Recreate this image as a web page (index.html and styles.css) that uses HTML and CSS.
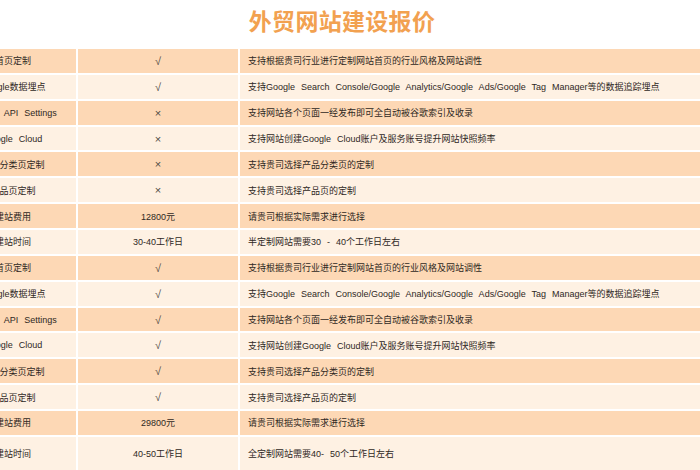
FILE: index.html
```html
<!DOCTYPE html>
<html lang="zh-CN">
<head>
<meta charset="utf-8">
<title>外贸网站建设报价</title>
<link rel="stylesheet" href="styles.css">
</head>
<body>
<div class="page">
  <h1 class="title">外贸网站建设报价</h1>
  <div class="table">
    <div class="row"><div class="c1">首页定制</div><div class="c2 mark">√</div><div class="c3">支持根据贵司行业进行定制网站首页的行业风格及网站调性</div></div>
    <div class="row"><div class="c1">Google数据埋点</div><div class="c2 mark">√</div><div class="c3">支持Google Search Console/Google Analytics/Google Ads/Google Tag Manager等的数据追踪埋点</div></div>
    <div class="row"><div class="c1">Google API Settings</div><div class="c2 mark">×</div><div class="c3">支持网站各个页面一经发布即可全自动被谷歌索引及收录</div></div>
    <div class="row"><div class="c1">Google Cloud</div><div class="c2 mark">×</div><div class="c3">支持网站创建Google Cloud账户及服务账号提升网站快照频率</div></div>
    <div class="row"><div class="c1">产品分类页定制</div><div class="c2 mark">×</div><div class="c3">支持贵司选择产品分类页的定制</div></div>
    <div class="row"><div class="c1">产品页定制</div><div class="c2 mark">×</div><div class="c3">支持贵司选择产品页的定制</div></div>
    <div class="row"><div class="c1">建站费用</div><div class="c2">12800元</div><div class="c3">请贵司根据实际需求进行选择</div></div>
    <div class="row"><div class="c1">建站时间</div><div class="c2">30-40工作日</div><div class="c3">半定制网站需要30 - 40个工作日左右</div></div>
    <div class="row"><div class="c1">首页定制</div><div class="c2 mark">√</div><div class="c3">支持根据贵司行业进行定制网站首页的行业风格及网站调性</div></div>
    <div class="row"><div class="c1">Google数据埋点</div><div class="c2 mark">√</div><div class="c3">支持Google Search Console/Google Analytics/Google Ads/Google Tag Manager等的数据追踪埋点</div></div>
    <div class="row"><div class="c1">Google API Settings</div><div class="c2 mark">√</div><div class="c3">支持网站各个页面一经发布即可全自动被谷歌索引及收录</div></div>
    <div class="row"><div class="c1">Google Cloud</div><div class="c2 mark">√</div><div class="c3">支持网站创建Google Cloud账户及服务账号提升网站快照频率</div></div>
    <div class="row"><div class="c1">产品分类页定制</div><div class="c2 mark">√</div><div class="c3">支持贵司选择产品分类页的定制</div></div>
    <div class="row"><div class="c1">产品页定制</div><div class="c2 mark">√</div><div class="c3">支持贵司选择产品页的定制</div></div>
    <div class="row"><div class="c1">建站费用</div><div class="c2">29800元</div><div class="c3">请贵司根据实际需求进行选择</div></div>
    <div class="row last"><div class="c1">建站时间</div><div class="c2">40-50工作日</div><div class="c3">全定制网站需要40- 50个工作日左右</div></div>
  </div>
</div>
</body>
</html>
```

FILE: styles.css
```css
html, body {
  margin: 0;
  padding: 0;
  background: #ffffff;
  overflow: hidden;
}
body {
  width: 700px;
  height: 470px;
  font-family: "Liberation Sans", "Noto Sans CJK SC", sans-serif;
}
.page {
  width: 700px;
  height: 470px;
  overflow: hidden;
}
.title {
  margin: 0;
  height: 49px;
  box-sizing: border-box;
  padding: 5px 16px 0 0;
  text-align: center;
  font-family: "Noto Sans CJK SC", sans-serif;
  font-size: 23px;
  line-height: 30px;
  font-weight: 700;
  color: #f2a150;
  letter-spacing: 0.3px;
}
.table {
  display: flex;
  flex-direction: column;
  gap: 2px;
  width: 752px;
  margin-left: -50px;
}
.row {
  display: grid;
  grid-template-columns: 126px 160px 1fr;
  gap: 2px;
  height: 23.86px;
  font-size: 9px;
  color: #2f2823;
  word-spacing: 3.5px;
}
.row.last {
  height: 33px;
}
.row > div {
  display: flex;
  align-items: center;
  background: #fdd8b5;
  white-space: nowrap;
}
.row:nth-child(even) > div {
  background: #fef1e3;
}
.c1 {
  justify-content: center;
}
.c2 {
  justify-content: center;
}
.c2.mark {
  font-size: 11px;
  color: #4f4a44;
}
.c3 {
  padding-left: 8px;
}
```
